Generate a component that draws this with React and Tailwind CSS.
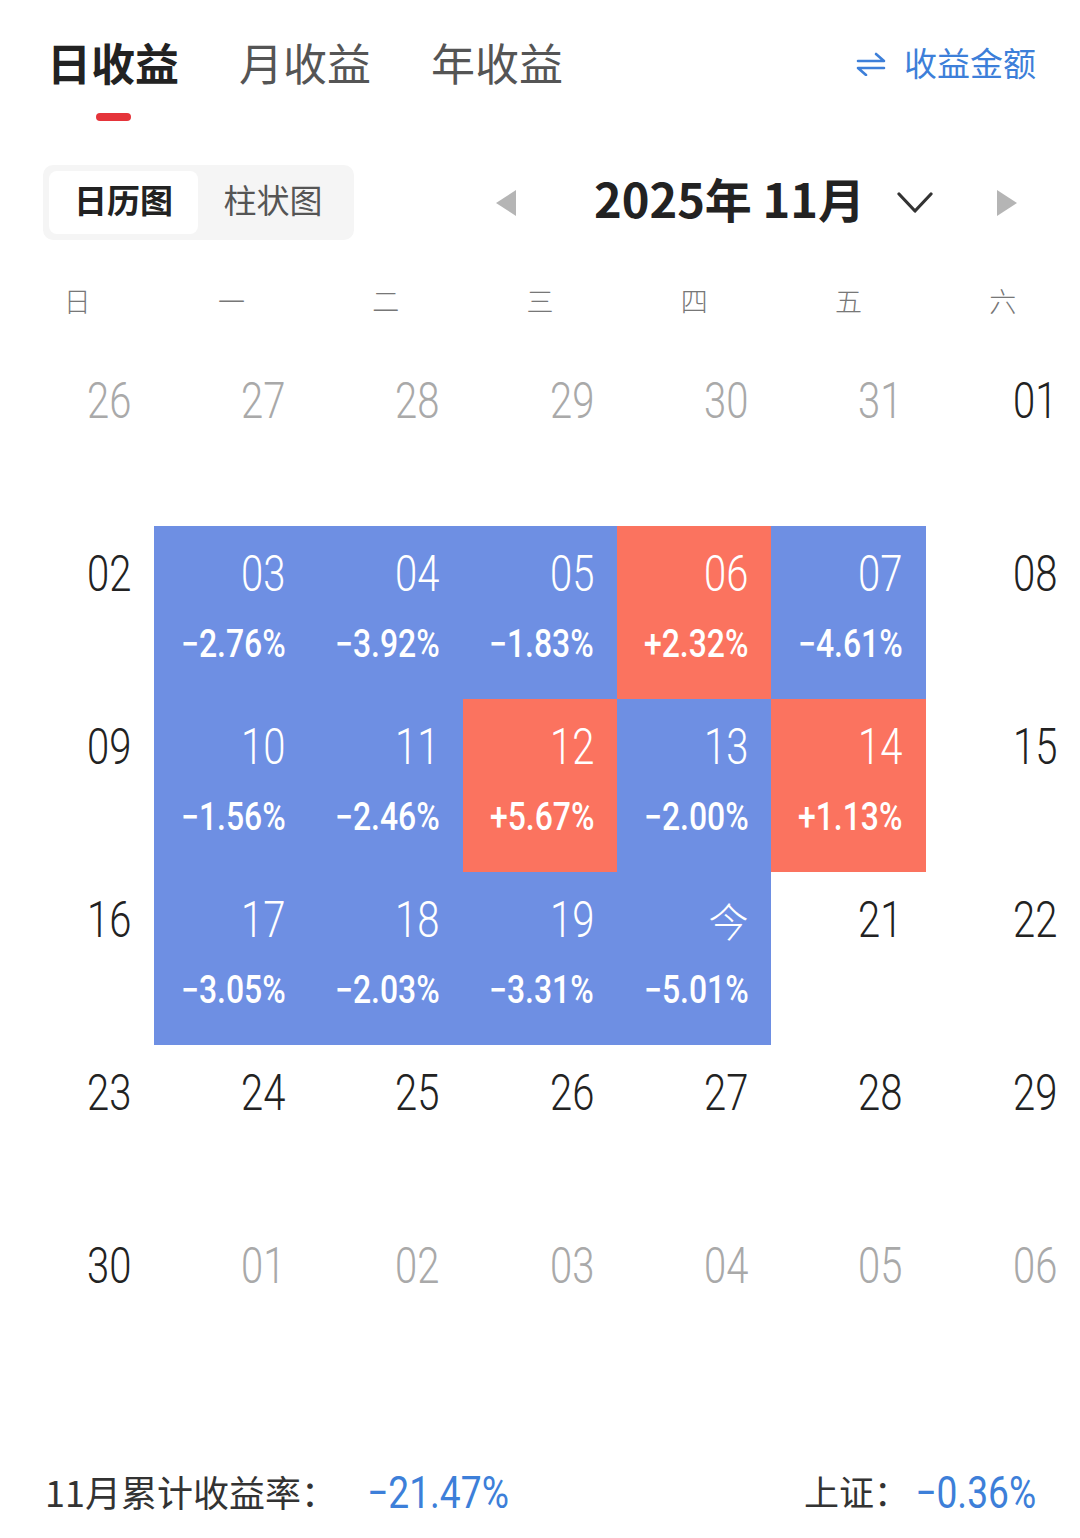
import React from 'react'

const rows = [
  [
    { day: '26', muted: true },
    { day: '27', muted: true },
    { day: '28', muted: true },
    { day: '29', muted: true },
    { day: '30', muted: true },
    { day: '31', muted: true },
    { day: '01' },
  ],
  [
    { day: '02' },
    { day: '03', pct: '−2.76%', tone: 'down' },
    { day: '04', pct: '−3.92%', tone: 'down' },
    { day: '05', pct: '−1.83%', tone: 'down' },
    { day: '06', pct: '+2.32%', tone: 'up' },
    { day: '07', pct: '−4.61%', tone: 'down' },
    { day: '08' },
  ],
  [
    { day: '09' },
    { day: '10', pct: '−1.56%', tone: 'down' },
    { day: '11', pct: '−2.46%', tone: 'down' },
    { day: '12', pct: '+5.67%', tone: 'up' },
    { day: '13', pct: '−2.00%', tone: 'down' },
    { day: '14', pct: '+1.13%', tone: 'up' },
    { day: '15' },
  ],
  [
    { day: '16' },
    { day: '17', pct: '−3.05%', tone: 'down' },
    { day: '18', pct: '−2.03%', tone: 'down' },
    { day: '19', pct: '−3.31%', tone: 'down' },
    { day: '20', pct: '−5.01%', tone: 'down', today: true },
    { day: '21' },
    { day: '22' },
  ],
  [
    { day: '23' },
    { day: '24' },
    { day: '25' },
    { day: '26' },
    { day: '27' },
    { day: '28' },
    { day: '29' },
  ],
  [
    { day: '30' },
    { day: '01', muted: true },
    { day: '02', muted: true },
    { day: '03', muted: true },
    { day: '04', muted: true },
    { day: '05', muted: true },
    { day: '06', muted: true },
  ],
]

const weekdays = ['日', '一', '二', '三', '四', '五', '六']

function Cell({ day, pct, tone, muted, today }) {
  const bg = tone === 'up' ? 'bg-[#fb735f]' : tone === 'down' ? 'bg-[#6e8fe3]' : 'bg-white'
  const color = tone ? 'text-white' : muted ? 'text-[#a9a9a9]' : 'text-[#222]'
  return (
    <div className={`flex h-[173px] flex-col items-end pr-[23px] pt-[22px] ${bg} ${color}`}>
      {today ? (
        <span className="text-[40px] font-light leading-[52px]">今</span>
      ) : (
        <span className="inline-block origin-right scale-x-[0.8] font-['Roboto',sans-serif] text-[50px] font-light leading-[52px]">
          {day}
        </span>
      )}
      {pct && (
        <span className="mt-[24px] inline-block origin-right scale-x-[0.84] font-['Roboto',sans-serif] text-[38px] font-medium leading-[40px]">
          {pct}
        </span>
      )}
    </div>
  )
}

export default function App() {
  return (
    <div className="min-h-[1538px] w-[1080px] bg-white font-['Noto_Sans_CJK_SC','Noto_Sans',sans-serif]">
      {/* tabs */}
      <div className="flex items-start justify-between pl-[47px] pr-[44px] pt-[40px]">
        <div className="flex gap-[60px]">
          <div className="flex flex-col items-center">
            <span className="text-[44px] font-bold leading-[44px] text-[#222]">日收益</span>
            <span className="mt-[29px] h-[8px] w-[35px] rounded-full bg-[#e5343a]" />
          </div>
          <span className="text-[44px] leading-[44px] text-[#555]">月收益</span>
          <span className="text-[44px] leading-[44px] text-[#555]">年收益</span>
        </div>
        <div className="flex h-[44px] items-center gap-[18px] text-[#3d7fd9]">
          <svg className="mt-[4px]" width="30" height="24" viewBox="0 0 30 24" fill="none" stroke="currentColor" strokeWidth="2.6" strokeLinecap="round" strokeLinejoin="round">
            <path d="M2 9 H28 L20 2" />
            <path d="M28 16 H2 L10 23" />
          </svg>
          <span className="text-[33px] leading-[44px]">收益金额</span>
        </div>
      </div>

      {/* view switch + month */}
      <div className="mt-[44px] flex items-center pl-[43px] pr-[63px]">
        <div className="flex h-[75px] w-[311px] rounded-[10px] bg-[#f5f5f5] p-[6px]">
          <div className="flex w-[149px] items-center justify-center rounded-[8px] bg-white pb-[6px] text-[33px] font-bold text-[#222]">
            日历图
          </div>
          <div className="flex flex-1 items-center justify-center pb-[6px] text-[33px] text-[#555]">柱状图</div>
        </div>
        <div className="ml-auto flex items-center">
          <svg width="20" height="26" viewBox="0 0 20 26">
            <path d="M20 0 L0 13 L20 26 Z" fill="#b5b5b5" />
          </svg>
          <span className="mb-[10px] ml-[78px] text-[47px] font-bold leading-[56px] text-[#222]">2025年 11月</span>
          <svg className="ml-[32px]" width="36" height="26" viewBox="0 0 36 26" fill="none" stroke="#333" strokeWidth="3.2" strokeLinecap="round" strokeLinejoin="round">
            <polyline points="2,4 18,21 34,4" />
          </svg>
          <svg className="ml-[64px]" width="20" height="26" viewBox="0 0 20 26">
            <path d="M0 0 L20 13 L0 26 Z" fill="#b5b5b5" />
          </svg>
        </div>
      </div>

      {/* weekdays */}
      <div className="mt-[31px] grid h-[60px] grid-cols-7 items-center">
        {weekdays.map((w) => (
          <span key={w} className="text-center text-[27px] font-light text-[#777]">
            {w}
          </span>
        ))}
      </div>

      {/* calendar */}
      <div className="mt-[22px] grid grid-cols-7">
        {rows.map((row, ri) =>
          row.map((c, ci) => <Cell key={`${ri}-${ci}`} {...c} />)
        )}
      </div>

      {/* summary */}
      <div className="mt-[76px] flex items-center justify-between pl-[45px] pr-[44px]">
        <div className="flex items-center">
          <span className="text-[36px] leading-[40px] text-[#333]">11月累计收益率：</span>
          <span className="ml-[30px] mt-[4px] inline-block origin-left scale-x-[0.845] font-['Roboto',sans-serif] text-[44px] leading-[44px] text-[#3d7fd9]">
            −21.47%
          </span>
        </div>
        <div className="flex items-center">
          <span className="mr-[6px] text-[35px] leading-[40px] text-[#333]">上证：</span>
          <span className="mt-[4px] flex w-[121px] justify-end">
            <span className="inline-block shrink-0 origin-right scale-x-[0.845] font-['Roboto',sans-serif] text-[44px] leading-[44px] text-[#3d7fd9]">
              −0.36%
            </span>
          </span>
        </div>
      </div>
    </div>
  )
}
